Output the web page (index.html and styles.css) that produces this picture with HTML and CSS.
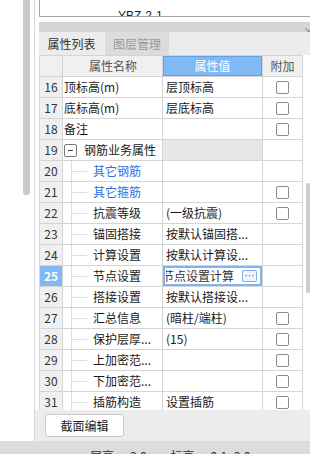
FILE: index.html
```html
<!DOCTYPE html>
<html lang="zh-CN">
<head>
  <meta charset="UTF-8" />
  <meta name="viewport" content="width=device-width, initial-scale=1.0"/>
  <title>属性列表</title>
  <link rel="stylesheet" href="styles.css">
</head>
<body>
  <div class="screen">
    <div class="work">
      <div class="gutter"><div class="gutter-thumb"></div></div>
      <div class="panel">
        <div class="preview"><span>YBZ-2-1</span></div>
        <div class="titlebar"><span class="close">×</span></div>
        <div class="tabs">
          <div class="tab active">属性列表</div>
          <div class="tab">图层管理</div>
        </div>

        <div class="grid-wrap">
          <div class="grid">
            <div class="row head">
              <div class="num"></div>
              <div class="name">属性名称</div>
              <div class="val">属性值</div>
              <div class="add">附加</div>
            </div>
            <div class="row">
              <div class="num">16</div><div class="name">顶标高(m)</div><div class="val">层顶标高</div>
              <div class="add"><span class="chk"></span></div>
            </div>
            <div class="row">
              <div class="num">17</div><div class="name">底标高(m)</div><div class="val">层底标高</div>
              <div class="add"><span class="chk"></span></div>
            </div>
            <div class="row">
              <div class="num">18</div><div class="name">备注</div><div class="val"></div>
              <div class="add"><span class="chk"></span></div>
            </div>
            <div class="row">
              <div class="num">19</div>
              <div class="name group"><span class="toggle"></span>钢筋业务属性</div>
              <div class="val gray"></div>
              <div class="add"></div>
            </div>
            <div class="row">
              <div class="num">20</div><div class="name child link">其它钢筋</div><div class="val"></div>
              <div class="add"></div>
            </div>
            <div class="row">
              <div class="num">21</div><div class="name child link">其它箍筋</div><div class="val"></div>
              <div class="add"><span class="chk"></span></div>
            </div>
            <div class="row">
              <div class="num">22</div><div class="name child">抗震等级</div><div class="val">(一级抗震)</div>
              <div class="add"><span class="chk"></span></div>
            </div>
            <div class="row">
              <div class="num">23</div><div class="name child">锚固搭接</div><div class="val">按默认锚固搭...</div>
              <div class="add"></div>
            </div>
            <div class="row">
              <div class="num">24</div><div class="name child">计算设置</div><div class="val">按默认计算设...</div>
              <div class="add"></div>
            </div>
            <div class="row">
              <div class="num current">25</div><div class="name child">节点设置</div>
              <div class="val editing">
                <div class="edit-text"><span>节点设置计算</span></div>
                <span class="more">⋯</span>
              </div>
              <div class="add"></div>
            </div>
            <div class="row">
              <div class="num">26</div><div class="name child">搭接设置</div><div class="val">按默认搭接设...</div>
              <div class="add"></div>
            </div>
            <div class="row">
              <div class="num">27</div><div class="name child">汇总信息</div><div class="val">(暗柱/端柱)</div>
              <div class="add"><span class="chk"></span></div>
            </div>
            <div class="row">
              <div class="num">28</div><div class="name child">保护层厚...</div><div class="val">(15)</div>
              <div class="add"><span class="chk"></span></div>
            </div>
            <div class="row">
              <div class="num">29</div><div class="name child">上加密范...</div><div class="val"></div>
              <div class="add"><span class="chk"></span></div>
            </div>
            <div class="row">
              <div class="num">30</div><div class="name child">下加密范...</div><div class="val"></div>
              <div class="add"><span class="chk"></span></div>
            </div>
            <div class="row">
              <div class="num">31</div><div class="name child">插筋构造</div><div class="val">设置插筋</div>
              <div class="add"><span class="chk"></span></div>
            </div>
          </div>
          <div class="vscroll"><div class="vthumb"></div></div>
        </div>

        <div class="actions">
          <button type="button">截面编辑</button>
        </div>
      </div>
    </div>
    <div class="status">
      <span class="s-label">层高</span><span class="s-value">3.0</span>
      <span class="s-label second">标高</span><span class="s-value">0.1~3.0</span>
    </div>
  </div>
</body>
</html>
```

FILE: styles.css
```css
* {
  box-sizing: border-box;
}

body {
  margin: 0;
  padding: 0;
  background: #fff;
  font-family: "Noto Sans CJK SC", "Noto Sans", sans-serif;
  font-size: 12px;
  color: #1a1a1a;
}

.screen {
  width: 310px;
  height: 454px;
  overflow: hidden;
}

.work {
  display: flex;
  height: 441px;
}

/* left strip with its scrollbar */
.gutter {
  width: 35px;
  flex: none;
  border-right: 1px solid #d6d6d6;
  background: #fff;
}

.gutter-thumb {
  margin-left: 23px;
  width: 7px;
  height: 195px;
  background: #c9c9c9;
  border-radius: 0 0 3px 3px;
}

.panel {
  flex: 1;
  display: flex;
  flex-direction: column;
  min-width: 0;
}

.preview {
  margin-left: 4px;
  height: 17px;
  padding: 9px 0 0 78px;
  border-left: 1px solid #a9a9a9;
  border-bottom: 1px solid #a9a9a9;
  overflow: hidden;
  line-height: 14px;
  color: #222;
  font-family: "Liberation Sans", sans-serif;
}

.titlebar {
  margin: 5px 0 0 4px;
  height: 10px;
  background: #d5d5d9;
  overflow: hidden;
  text-align: right;
}

.titlebar .close {
  display: inline-block;
  margin-right: -4px;
  font-size: 11px;
  line-height: 10px;
  color: #777;
}

.tabs {
  margin-left: 4px;
  height: 23px;
  display: flex;
  background: #ececec;
}

.tab {
  width: 65px;
  line-height: 23px;
  text-align: center;
  font-size: 12px;
  color: #999;
  background: #dcdcdc;
  border-left: 1px solid #f4f4f4;
}

.tab.active {
  color: #333;
  background: #ececec;
  border-left: none;
}

/* property table */
.grid-wrap {
  margin-left: 4px;
  height: 355px;
  display: flex;
  overflow: hidden;
  background: #fff;
}

.grid {
  width: 264px;
  flex: none;
  border-left: 1px solid #d4d4d4;
  border-top: 1px solid #d4d4d4;
}

.row {
  display: flex;
  height: 21px;
  border-bottom: 1px solid #d4d4d4;
  line-height: 20px;
  white-space: nowrap;
}

.row > div {
  border-right: 1px solid #d4d4d4;
  overflow: hidden;
}

.num {
  width: 23px;
  text-align: center;
  background: #f0f0f0;
  color: #333;
}

.num.current {
  background: #80b8f4;
  color: #fff;
  font-weight: bold;
}

.name {
  width: 100px;
  padding-left: 1px;
}

.name.child {
  padding-left: 30px;
  background:
    linear-gradient(#dfdfdf, #dfdfdf) 8px 0 / 1px 100% no-repeat,
    linear-gradient(#dfdfdf, #dfdfdf) 8px 10px / 16px 1px no-repeat;
}

.name.link {
  color: #2f6fe4;
}

.name.group {
  display: flex;
  align-items: center;
  padding-left: 1px;
}

.toggle {
  width: 13px;
  height: 13px;
  margin-right: 7px;
  border: 1px solid #777;
  border-radius: 2px;
  background: linear-gradient(#444, #444) center / 5px 1px no-repeat;
}

.val {
  width: 100px;
  padding-left: 3px;
}

.val.gray {
  background: #e7e7e7;
}

.val.editing {
  display: flex;
  align-items: center;
  box-shadow: inset 0 0 0 2px #7fb4ef;
}

.edit-text {
  flex: 1;
  overflow: hidden;
  margin-right: 3px;
}

.edit-text span {
  display: block;
  margin-left: -4px;
  color: #333;
}

.more {
  width: 15px;
  height: 12px;
  margin-right: 5px;
  border: 1px solid #7fb0e8;
  border-radius: 2px;
  background: #eef5fd;
  color: #4a78b5;
  font-size: 10px;
  line-height: 9px;
  text-align: center;
}

.add {
  width: 40px;
  display: flex;
  align-items: center;
  justify-content: center;
}

.chk {
  width: 13px;
  height: 13px;
  border: 1px solid #8a8a8a;
  border-radius: 2px;
  background: #fff;
}

.row.head .num,
.row.head .name,
.row.head .add {
  background: #f0f0f0;
  color: #555;
  text-align: center;
}

.row.head .val {
  background: #80b9f5;
  box-shadow: inset 0 0 0 1px #62a2ea;
  color: #fff;
  text-align: center;
  padding-left: 0;
}

.vscroll {
  flex: 1;
  background: #fff;
}

.vthumb {
  margin: 128px 0 0 3px;
  width: 5px;
  height: 110px;
  background: #cdcdcd;
  border-radius: 2px;
}

/* bottom button strip */
.actions {
  flex: 1;
  padding: 4px 0 0 10px;
  background: #ececec;
}

.actions button {
  width: 79px;
  height: 23px;
  padding: 0;
  border: 1px solid #c9c9c9;
  border-radius: 3px;
  background: #fff;
  font-family: "Noto Sans CJK SC", sans-serif;
  font-size: 12px;
  color: #222;
}

.status {
  height: 13px;
  padding: 9px 0 0 90px;
  background: #dcdcdc;
  line-height: 12px;
  color: #333;
  white-space: nowrap;
  overflow: hidden;
}

.s-value {
  margin-left: 16px;
}

.s-label.second {
  margin-left: 21px;
}
```
